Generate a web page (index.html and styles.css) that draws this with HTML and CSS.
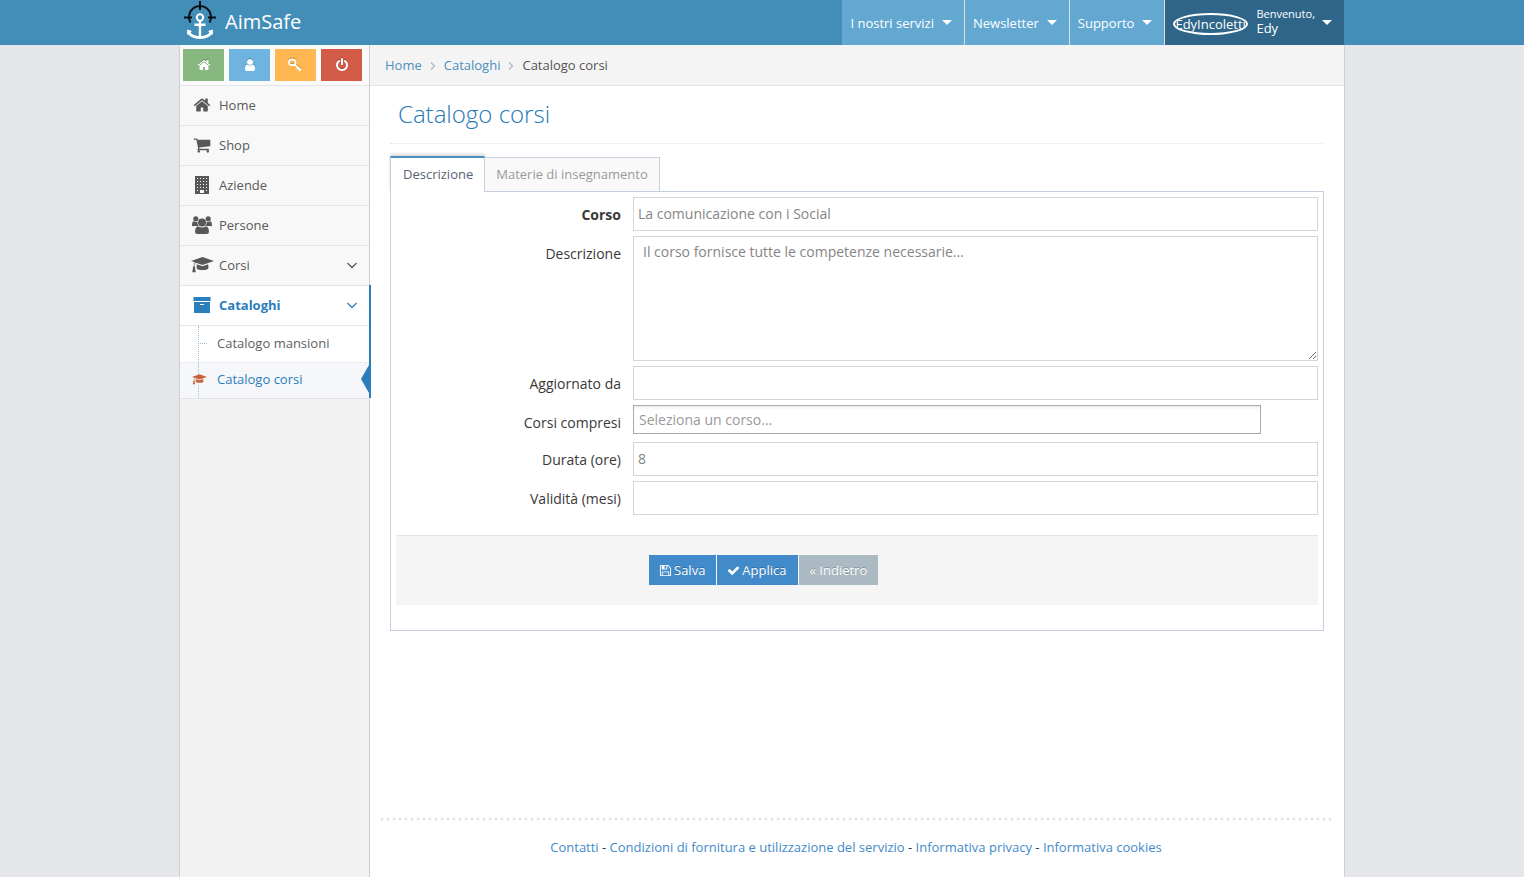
FILE: index.html
```html
<!DOCTYPE html>
<html lang="it">
<head>
<meta charset="utf-8">
<title>AimSafe - Catalogo corsi</title>
<link rel="stylesheet" href="styles.css">
</head>
<body>
<svg class="sprite" aria-hidden="true">
  <symbol id="home" viewBox="0 0 1792 1792"><path d="M1472 992v480q0 26-19 45t-45 19h-384v-384h-256v384h-384q-26 0-45-19t-19-45v-480q0-1 .5-3t.5-3l575-474 575 474q1 2 1 6zm223-69l-62 74q-8 9-21 11h-3q-13 0-21-7l-692-577-692 577q-12 8-24 7-13-2-21-11l-62-74q-8-10-7-23.5t11-21.5l719-599q32-26 76-26t76 26l244 204v-195q0-14 9-23t23-9h192q14 0 23 9t9 23v408l219 182q10 8 11 21.5t-7 23.5z"/></symbol>
  <symbol id="cart" viewBox="0 0 1792 1792"><path d="M704 1536q0 52-38 90t-90 38-90-38-38-90 38-90 90-38 90 38 38 90zm896 0q0 52-38 90t-90 38-90-38-38-90 38-90 90-38 90 38 38 90zm128-1088v512q0 24-16.5 42.5t-40.5 21.5l-1044 122q13 60 13 70 0 16-24 64h920q26 0 45 19t19 45-19 45-45 19h-1024q-26 0-45-19t-19-45q0-11 8-31.5t16-36 21.5-40 15.5-29.5l-177-823h-204q-26 0-45-19t-19-45 19-45 45-19h256q16 0 28.5 6.5t19.5 15.5 13 24.5 8 26 5.5 29.5 4.5 26h1201q26 0 45 19t19 45z"/></symbol>
  <symbol id="building" viewBox="0 0 18 18"><path fill-rule="evenodd" d="M2 0h14v18H2zM4 2v1h1V2zm3 0v1h1V2zm3 0v1h1V2zm3 0v1h1V2zM4 5v1h1V5zm3 0v1h1V5zm3 0v1h1V5zm3 0v1h1V5zM4 8v1h1V8zm3 0v1h1V8zm3 0v1h1V8zm3 0v1h1V8zM4 11v1h1v-1zm3 0v1h1v-1zm3 0v1h1v-1zm3 0v1h1v-1zM4 14v1h1v-1zm9 0v1h1v-1zM7 14v3h4v-3z"/></symbol>
  <symbol id="users" viewBox="0 0 20 18"><circle cx="3.8" cy="2.8" r="2.6"/><circle cx="16.2" cy="2.8" r="2.6"/><path d="M0 9.5C0 7 .5 5.2 1.8 5.2q2 1.2 3.7.7Q5 8.500 6.600 10H2Q0 10.500 0 9.500zM20 9.500C20 7 19.500 5.200 18.200 5.200q-2 1.200-3.700.7Q15 8.500 13.400 10H18q2 .5 2-.5z"/><circle cx="10" cy="6.500" r="4"/><path d="M6.200 10.200q3.800 2.600 7.600 0c2 .2 3.200 2.800 3.200 5.600q0 2.200-2.300 2.200H5.300Q3 18 3 15.800c0-2.800 1.200-5.400 3.200-5.600z"/></symbol>
  <symbol id="cap" viewBox="0 0 23 16"><path d="M11.500 0 23 4.100 11.500 7.900 4.900 5.700Q3.400 6.300 3.300 9q.8.500.7 1.500l.7 4.800H1.300L2 10.500q-.2-1 .7-1.500.1-2.500 1.200-3.700L0 4.100zM5.800 7.300l5.700 1.900 5.700-1.900.3 3.400q-.1 2.300-6 2.400-5.600-.1-6-2.400z"/></symbol>
  <symbol id="archive" viewBox="0 0 18 16"><path fill-rule="evenodd" d="M.5 0h17v4H.5zM1 5h16v11H1zm6 2v1h4V7z"/></symbol>
  <symbol id="down" viewBox="0 0 1792 1792"><path d="M1395 736q0 13-10 23l-466 466q-10 10-23 10t-23-10l-466-466q-10-10-10-23t10-23l50-50q10-10 23-10t23 10l393 393 393-393q10-10 23-10t23 10l50 50q10 10 10 23z"/></symbol>
  <symbol id="right" viewBox="0 0 6 8"><path d="M1 .5 4.500 4 1 7.500" fill="none" stroke="currentColor" stroke-width="1.300"/></symbol>
  <symbol id="user" viewBox="0 0 1792 1792"><path d="M1536 1399q0 109-62.500 187t-150.500 78h-854q-88 0-150.500-78t-62.500-187q0-85 8.500-160.500t31.500-152 58.500-131 94-89 134.500-34.500q131 128 313 128t313-128q76 0 134.500 34.500t94 89 58.500 131 31.500 152 8.500 160.500zm-256-887q0 159-112.500 271.500t-271.500 112.500-271.500-112.500-112.500-271.500 112.500-271.500 271.500-112.500 271.500 112.500 112.500 271.500z"/></symbol>
  <symbol id="key" viewBox="0 0 14 14"><g fill="none" stroke="currentColor"><ellipse cx="4.200" cy="4.200" rx="3.400" ry="2.900" stroke-width="1.700"/><path d="m6.500 6.300 6.300 5.700M8.800 10.800l1.700-2M11 13l1.900-2.200" stroke-width="1.800"/></g></symbol>
  <symbol id="power" viewBox="0 0 1792 1792"><path d="M1664 896q0 156-61 298t-164 245-245 164-298 61-298-61-245-164-164-245-61-298q0-182 80.500-343t226.500-270q43-32 95.500-25t83.500 50q32 42 24.500 94.500t-49.500 84.500q-98 74-151.500 181t-53.500 228q0 104 40.500 198.500t109.500 163.500 163.500 109.500 198.500 40.500 198.500-40.500 163.500-109.500 109.500-163.500 40.500-198.500q0-121-53.500-228t-151.500-181q-42-32-49.500-84.500t24.500-94.500q31-43 84-50t95 25q146 109 226.500 270t80.500 343zm-640-768v640q0 52-38 90t-90 38-90-38-38-90v-640q0-52 38-90t90-38 90 38 38 90z"/></symbol>
  <symbol id="save" viewBox="0 0 1792 1792"><path d="M512 1536h768v-384h-768v384zm896 0h128v-896q0-14-10-38.500t-20-34.500l-281-281q-10-10-34-20t-39-10v416q0 40-28 68t-68 28h-576q-40 0-68-28t-28-68v-416h-128v1280h128v-416q0-40 28-68t68-28h832q40 0 68 28t28 68v416zm-384-928v-320q0-13-9.500-22.500t-22.500-9.500h-192q-13 0-22.500 9.500t-9.500 22.500v320q0 13 9.500 22.500t22.500 9.500h192q13 0 22.500-9.500t9.500-22.500zm640 32v928q0 40-28 68t-68 28h-1344q-40 0-68-28t-28-68v-1344q0-40 28-68t68-28h928q40 0 88 20t76 48l280 280q28 28 48 76t20 88z"/></symbol>
  <symbol id="check" viewBox="0 0 1792 1792"><path d="M1671 566q0 40-28 68l-724 724-136 136q-28 28-68 28t-68-28l-136-136-362-362q-28-28-28-68t28-68l136-136q28-28 68-28t68 28l294 295 656-657q28-28 68-28t68 28l136 136q28 28 28 68z"/></symbol>
  <symbol id="caret" viewBox="0 0 10 5"><path d="M0 0h10L5 5z"/></symbol>
</svg>

<header class="navbar">
  <div class="navbar-inner">
    <a class="brand" href="#">
      <svg class="logo" viewBox="0 0 34 40" aria-hidden="true">
        <g fill="none" stroke="#0a0f14" stroke-width="2">
          <path d="M7.500 22.500A11 11 0 1 1 26.500 22.500"/>
          <path d="M17 1v9M1 17.500h8M25 17.500h8"/>
        </g>
        <g fill="none" stroke="#fff">
          <circle cx="17" cy="17.500" r="3.200" stroke-width="2"/>
          <path d="M17 20.500V37M11.500 24.800h11" stroke-width="2.400"/>
          <path d="M5 31.500Q8 37.300 17 37.700 26 37.300 29 31.500" stroke-width="2.800"/>
        </g>
        <path fill="#fff" d="m4 29.500 5 1.500-4.500 4zM30 29.500 25 31l4.500 4z"/>
      </svg>
      <span>AimSafe</span>
    </a>
    <nav class="nav-menu">
      <a class="nav-item" href="#">I nostri servizi <svg class="caret"><use href="#caret"/></svg></a>
      <a class="nav-item" href="#">Newsletter <svg class="caret"><use href="#caret"/></svg></a>
      <a class="nav-item" href="#">Supporto <svg class="caret"><use href="#caret"/></svg></a>
      <a class="nav-item nav-user" href="#">
        <span class="avatar">EdyIncoletti</span>
        <span class="welcome"><small>Benvenuto,</small>Edy</span>
        <svg class="caret"><use href="#caret"/></svg>
      </a>
    </nav>
  </div>
</header>

<div class="container">
  <aside class="sidebar">
    <div class="shortcuts">
      <button class="shortcut green" aria-label="Home"><svg><use href="#home"/></svg></button>
      <button class="shortcut blue" aria-label="Profilo"><svg><use href="#user"/></svg></button>
      <button class="shortcut orange" aria-label="Password"><svg><use href="#key"/></svg></button>
      <button class="shortcut red" aria-label="Esci"><svg><use href="#power"/></svg></button>
    </div>
    <ul class="menu">
      <li><a href="#"><span class="slot"><svg class="icon"><use href="#home"/></svg></span>Home</a></li>
      <li><a href="#"><span class="slot"><svg class="icon"><use href="#cart"/></svg></span>Shop</a></li>
      <li><a href="#"><span class="slot"><svg class="icon"><use href="#building"/></svg></span>Aziende</a></li>
      <li><a href="#"><span class="slot"><svg class="icon icon-users"><use href="#users"/></svg></span>Persone</a></li>
      <li><a href="#"><span class="slot"><svg class="icon-cap"><use href="#cap"/></svg></span>Corsi<svg class="arrow"><use href="#down"/></svg></a></li>
      <li class="open">
        <a href="#"><span class="slot"><svg class="icon-archive"><use href="#archive"/></svg></span>Cataloghi<svg class="arrow"><use href="#down"/></svg></a>
        <ul class="submenu">
          <li><a href="#">Catalogo mansioni</a></li>
          <li class="current"><a href="#"><svg class="sub-icon"><use href="#cap"/></svg>Catalogo corsi</a></li>
        </ul>
      </li>
    </ul>
  </aside>

  <main class="main">
    <nav class="breadcrumb">
      <a href="#">Home</a><svg><use href="#right"/></svg>
      <a href="#">Cataloghi</a><svg><use href="#right"/></svg>
      <span>Catalogo corsi</span>
    </nav>
    <div class="content">
      <h1>Catalogo corsi</h1>
      <div class="tabs" role="tablist">
        <button class="tab active" role="tab" aria-selected="true">Descrizione</button>
        <button class="tab" role="tab" aria-selected="false">Materie di insegnamento</button>
      </div>
      <form class="panel">
        <div class="row"><label class="strong" for="corso">Corso</label><input id="corso" type="text" value="La comunicazione con i Social"></div>
        <div class="row"><label for="descrizione">Descrizione</label><textarea id="descrizione">Il corso fornisce tutte le competenze necessarie...</textarea></div>
        <div class="row"><label for="aggiornato">Aggiornato da</label><input id="aggiornato" type="text"></div>
        <div class="row row-chosen"><label for="compresi">Corsi compresi</label><input class="chosen" id="compresi" type="text" placeholder="Seleziona un corso..."></div>
        <div class="row"><label for="durata">Durata (ore)</label><input id="durata" type="text" value="8"></div>
        <div class="row"><label for="validita">Validità (mesi)</label><input id="validita" type="text"></div>
        <div class="actions">
          <button class="btn" type="button"><svg><use href="#save"/></svg>Salva</button>
          <button class="btn" type="button"><svg><use href="#check"/></svg>Applica</button>
          <button class="btn btn-grey" type="button">« Indietro</button>
        </div>
      </form>
    </div>
    <footer class="footer">
      <svg class="dots" aria-hidden="true"><line x1="2" y1="2" x2="100%" y2="2"/></svg>
      <p><a href="#">Contatti</a> - <a href="#">Condizioni di fornitura e utilizzazione del servizio</a> - <a href="#">Informativa privacy</a> - <a href="#">Informativa cookies</a></p>
    </footer>
  </main>
</div>
</body>
</html>
```

FILE: styles.css
```css
* { box-sizing: border-box; }
body {
  margin: 0;
  min-height: 100vh;
  display: flex;
  flex-direction: column;
  background: #e4e6e9;
  color: #393939;
  font: 13px/20px "Open Sans", sans-serif;
}
a { color: #428bca; text-decoration: none; }
ul { list-style: none; margin: 0; padding: 0; }
svg { fill: currentColor; flex: none; }
button, input, textarea { font-family: inherit; border-radius: 0; margin: 0; }
button { cursor: pointer; }
.sprite { position: absolute; width: 0; height: 0; }

/* Top bar */
.navbar { background: #438eb9; }
.navbar-inner {
  max-width: 1164px;
  width: 100%;
  height: 45px;
  margin: 0 auto;
  display: flex;
  justify-content: space-between;
}
.brand { display: flex; gap: 8px; padding-left: 3px; color: #fff; font-size: 20px; line-height: 43px; }
.logo { width: 34px; height: 40px; }
.nav-menu { display: flex; }
.nav-item {
  display: flex;
  align-items: center;
  gap: 8px;
  padding: 0 12px 0 8px;
  background: #62a8d1;
  color: #fff;
  border-left: 1px solid #ddd;
}
.nav-item:first-child { border-left: 0; }
.caret { width: 10px; height: 5px; }
.nav-user { background: #2e6589; }
.avatar {
  width: 75px;
  height: 22px;
  margin-top: 2px;
  border: 2px solid #fff;
  border-radius: 50%;
  overflow: hidden;
  line-height: 18px;
  white-space: nowrap;
}
.welcome { padding-bottom: 3px; line-height: 15px; }
.welcome small { display: block; font-size: 11px; }
.nav-user .caret { margin-left: -1px; }

/* Page frame */
.container {
  flex: 1;
  max-width: 1166px;
  width: 100%;
  margin: 0 auto;
  display: flex;
  background: #fff;
  border: solid #ccced1;
  border-width: 0 1px;
}

/* Sidebar */
.sidebar { width: 190px; flex: none; background: #f2f2f2; border-right: 1px solid #ccc; }
.shortcuts { display: flex; gap: 5px; height: 40px; padding: 4px 3px; background: #fafafa; }
.shortcut {
  width: 41px;
  height: 32px;
  padding: 0;
  border: 0;
  color: #fff;
  display: flex;
  align-items: center;
  justify-content: center;
}
.shortcut svg { width: 14px; height: 14px; filter: drop-shadow(0 -1px 0 rgba(0, 0, 0, .25)); }
.shortcut.orange { padding-right: 2px; }
.green { background: #87b87f; }
.blue { background: #6fb3e0; }
.orange { background: #ffb752; }
.red { background: #d15b47; }
.menu > li { border-top: 1px solid #e5e5e5; }
.menu > li > a {
  display: flex;
  align-items: center;
  gap: 2px;
  height: 39px;
  padding: 0 8px 1px 7px;
  background: #f8f8f8;
  color: #585858;
}
.slot { width: 30px; display: flex; justify-content: center; }
.icon { width: 18px; height: 18px; }
.icon-users { width: 20px; }
.icon-cap { width: 23px; height: 16px; }
.icon-archive { width: 18px; height: 16px; }
.arrow { width: 18px; height: 18px; margin-left: auto; }
.menu > .open { position: relative; border-bottom: 1px solid #e5e5e5; }
.menu > .open::after {
  content: "";
  position: absolute;
  top: -1px;
  bottom: 0;
  right: -2px;
  width: 2px;
  background: #2b7dbc;
}
.menu > .open > a { background: #fff; color: #2b7dbc; font-weight: 700; }
.submenu { position: relative; background: #fff; border-top: 1px solid #e5e5e5; }
.submenu::before {
  content: "";
  position: absolute;
  top: 0;
  bottom: 0;
  left: 18px;
  border-left: 1px dotted #9dbdd6;
  z-index: 1;
}
.submenu a { display: block; position: relative; padding: 7px 0 9px 37px; color: #616161; }
.submenu li:first-child a::before {
  content: "";
  position: absolute;
  left: 20px;
  top: 17px;
  width: 7px;
  border-top: 1px dotted #9dbdd6;
}
.submenu .current a { padding-top: 6px; background: #f5f7fa; color: #2b7dbc; border-top: 1px dotted #e4e4e4; }
.submenu .current a::after {
  content: "";
  position: absolute;
  right: 0;
  top: 2px;
  border: solid transparent;
  border-width: 14px 8px 14px 0;
  border-right-color: #2b7dbc;
}
.sub-icon {
  position: absolute;
  left: 12px;
  top: 11px;
  width: 15px;
  height: 11px;
  color: #c86139;
  background: #f5f7fa;
  z-index: 2;
}

/* Main column */
.main { flex: 1; min-width: 0; display: flex; flex-direction: column; }
.breadcrumb {
  display: flex;
  align-items: center;
  gap: 8px;
  height: 41px;
  padding-left: 15px;
  background: #f4f4f4;
  border-bottom: 1px solid #e5e5e5;
  color: #555;
}
.breadcrumb a { color: #4c8fbd; }
.breadcrumb svg { width: 6px; height: 8px; margin-top: 2px; color: #b2b6bf; }
.content { flex: 1; padding: 8px 20px 20px; }
h1 {
  margin: 0 0 12px;
  padding: 0 8px 9px;
  color: #2679b5;
  font-size: 24px;
  font-weight: 300;
  line-height: 40px;
  border-bottom: 1px dotted #e2e2e2;
}
.tabs { display: flex; align-items: flex-end; position: relative; }
.tab {
  height: 35px;
  margin-bottom: -1px;
  padding: 0 11px 2px;
  border: 1px solid #c5d0dc;
  border-left-width: 0;
  background: #f9f9f9;
  color: #999;
  font-size: 13px;
}
.tab.active {
  height: 36px;
  padding-left: 12px;
  border-left-width: 1px;
  border-top: 2px solid #4c8fbd;
  border-bottom: 0;
  background: #fff;
  color: #576373;
  box-shadow: 0 -2px 3px rgba(0, 0, 0, .15);
}
.panel { display: flex; flex-direction: column; gap: 5px; padding: 5px 5px 25px; border: 1px solid #c5d0dc; }
.row { display: grid; grid-template-columns: minmax(0, 237fr) minmax(0, 685fr); align-items: start; font-size: 14px; }
.row label { padding: 8px 12px 0 0; text-align: right; }
.strong { font-weight: 700; }
.row input, .row textarea {
  display: block;
  width: 100%;
  height: 34px;
  padding: 4px 4px 6px;
  border: 1px solid #d5d5d5;
  background: #fff;
  color: #858585;
  font-size: 14px;
}
.row textarea { height: 125px; padding: 5px 9px; line-height: 20px; resize: both; }
.row-chosen { height: 32px; }
.row .chosen {
  width: 628px;
  max-width: 100%;
  height: 29px;
  padding: 0 5px 1px;
  border-color: #aaa;
  background: linear-gradient(#eee 1%, #fff 15%);
}
.chosen::placeholder { color: #999; }
.actions {
  display: flex;
  gap: 1px;
  margin-top: 15px;
  padding: 19px 0 20px 253px;
  background: #f5f5f5;
  border-top: 1px solid #e5e5e5;
}
.btn {
  display: flex;
  align-items: center;
  gap: 2px;
  height: 30px;
  padding: 0 11px 0 10px;
  border: 0;
  background: #428bca;
  color: #fff;
  font-size: 13px;
  text-shadow: 0 -1px 0 rgba(0, 0, 0, .25);
}
.btn svg { width: 13px; height: 13px; }
.btn-grey { padding-left: 11px; background: #abbac3; }

/* Footer */
.footer { padding: 0 12px 20px 10px; text-align: center; }
.dots { display: block; width: 100%; height: 4px; }
.dots line { stroke: #e5e5e5; stroke-width: 3px; stroke-linecap: round; stroke-dasharray: 0 6; }
.footer p { margin: 16px 0 0; }
```
